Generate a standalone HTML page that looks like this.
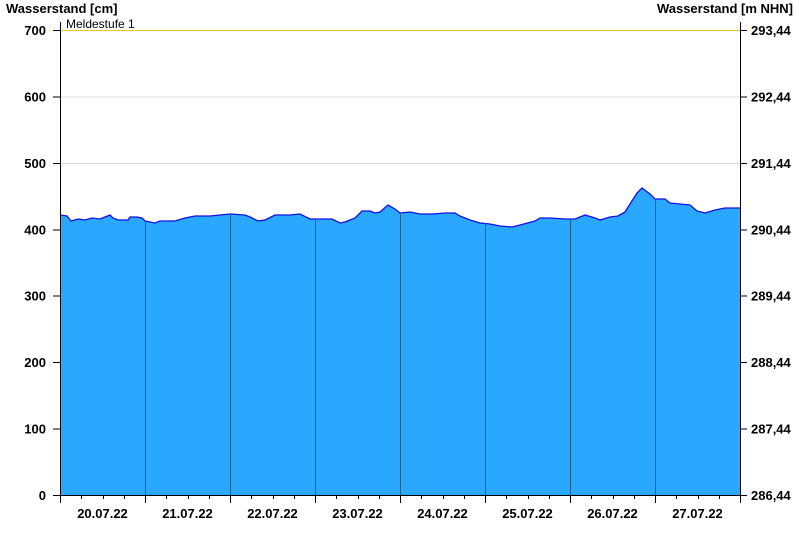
<!DOCTYPE html>
<html><head><meta charset="utf-8"><style>
html,body{margin:0;padding:0;background:#fff;}
svg{display:block;}
text{font-family:"Liberation Sans",Arial,sans-serif;}
.b{font-weight:bold;font-size:13px;fill:#000;}
</style></head><body>
<svg width="800" height="550" viewBox="0 0 800 550" xmlns="http://www.w3.org/2000/svg">
<rect width="800" height="550" fill="#fff"/>
<g stroke="#dcdcdc" stroke-width="1">
<line x1="60" y1="97" x2="740" y2="97"/>
<line x1="60" y1="163.5" x2="740" y2="163.5"/>
<line x1="60" y1="230" x2="740" y2="230"/>
<line x1="60" y1="296" x2="740" y2="296"/>
<line x1="60" y1="362.5" x2="740" y2="362.5"/>
<line x1="60" y1="429" x2="740" y2="429"/>
</g>
<line x1="60" y1="30.5" x2="740" y2="30.5" stroke="#f5c518" stroke-width="1"/>
<text x="66" y="28" font-size="12" fill="#000">Meldestufe 1</text>
<polygon fill="#2aa8ff" stroke="none" points="60,495 60,215 67,216 71,221 78,219 85,220 92,218 100,219 105,217 110,215 113,218 118,220 128,220 130,217 137,217 142,218 145,221 155,223 160,221 175,221 185,218 195,216 210,216 220,215 230,214 245,215 250,217 258,221 265,220 275,215 290,215 300,214 310,219 320,219 332,219 340,223 345,222 355,218 362,211 370,211 375,213 380,212 388,205 395,209 400,213 410,212 420,214 433,214 445,213 455,213 460,216 470,220 480,223 490,224 500,226 512,227 520,225 535,221 540,218 550,218 565,219 575,219 580,217 585,215 595,218 600,220 610,217 618,216 625,212 630,204 637,193 642,188 650,194 655,199 665,199 670,203 680,204 690,205 697,211 705,213 715,210 725,208 740,208 740,495"/>
<polyline fill="none" stroke="#1010e0" stroke-width="1.3" points="60,215 67,216 71,221 78,219 85,220 92,218 100,219 105,217 110,215 113,218 118,220 128,220 130,217 137,217 142,218 145,221 155,223 160,221 175,221 185,218 195,216 210,216 220,215 230,214 245,215 250,217 258,221 265,220 275,215 290,215 300,214 310,219 320,219 332,219 340,223 345,222 355,218 362,211 370,211 375,213 380,212 388,205 395,209 400,213 410,212 420,214 433,214 445,213 455,213 460,216 470,220 480,223 490,224 500,226 512,227 520,225 535,221 540,218 550,218 565,219 575,219 580,217 585,215 595,218 600,220 610,217 618,216 625,212 630,204 637,193 642,188 650,194 655,199 665,199 670,203 680,204 690,205 697,211 705,213 715,210 725,208 740,208"/>
<g stroke="#1f5f8f" stroke-width="1">
<line x1="145.5" y1="221" x2="145.5" y2="495"/>
<line x1="230.5" y1="214" x2="230.5" y2="495"/>
<line x1="315.5" y1="219" x2="315.5" y2="495"/>
<line x1="400.5" y1="213" x2="400.5" y2="495"/>
<line x1="485.5" y1="223" x2="485.5" y2="495"/>
<line x1="570.5" y1="219" x2="570.5" y2="495"/>
<line x1="655.5" y1="199" x2="655.5" y2="495"/>
</g>
<g stroke="#000" stroke-width="1">
<line x1="60.5" y1="22" x2="60.5" y2="496"/>
<line x1="740.5" y1="22" x2="740.5" y2="496"/>
<line x1="60" y1="495.5" x2="741" y2="495.5"/>
<line x1="53" y1="30.5" x2="60" y2="30.5"/>
<line x1="53" y1="97" x2="60" y2="97"/>
<line x1="53" y1="163.5" x2="60" y2="163.5"/>
<line x1="53" y1="230" x2="60" y2="230"/>
<line x1="53" y1="296" x2="60" y2="296"/>
<line x1="53" y1="362.5" x2="60" y2="362.5"/>
<line x1="53" y1="429" x2="60" y2="429"/>
<line x1="53" y1="495.5" x2="60" y2="495.5"/>
<line x1="740" y1="30.5" x2="747" y2="30.5"/>
<line x1="740" y1="97" x2="747" y2="97"/>
<line x1="740" y1="163.5" x2="747" y2="163.5"/>
<line x1="740" y1="230" x2="747" y2="230"/>
<line x1="740" y1="296" x2="747" y2="296"/>
<line x1="740" y1="362.5" x2="747" y2="362.5"/>
<line x1="740" y1="429" x2="747" y2="429"/>
<line x1="740" y1="495.5" x2="747" y2="495.5"/>
</g>
<g stroke="#000" stroke-width="1">
<line x1="60.5" y1="495" x2="60.5" y2="503"/><line x1="145.5" y1="495" x2="145.5" y2="503"/><line x1="230.5" y1="495" x2="230.5" y2="503"/><line x1="315.5" y1="495" x2="315.5" y2="503"/><line x1="400.5" y1="495" x2="400.5" y2="503"/><line x1="485.5" y1="495" x2="485.5" y2="503"/><line x1="570.5" y1="495" x2="570.5" y2="503"/><line x1="655.5" y1="495" x2="655.5" y2="503"/><line x1="740.5" y1="495" x2="740.5" y2="503"/>
<line x1="81.5" y1="495" x2="81.5" y2="499"/><line x1="103.5" y1="495" x2="103.5" y2="499"/><line x1="124.5" y1="495" x2="124.5" y2="499"/>
<line x1="166.5" y1="495" x2="166.5" y2="499"/><line x1="188.5" y1="495" x2="188.5" y2="499"/><line x1="209.5" y1="495" x2="209.5" y2="499"/>
<line x1="251.5" y1="495" x2="251.5" y2="499"/><line x1="273.5" y1="495" x2="273.5" y2="499"/><line x1="294.5" y1="495" x2="294.5" y2="499"/>
<line x1="336.5" y1="495" x2="336.5" y2="499"/><line x1="358.5" y1="495" x2="358.5" y2="499"/><line x1="379.5" y1="495" x2="379.5" y2="499"/>
<line x1="421.5" y1="495" x2="421.5" y2="499"/><line x1="443.5" y1="495" x2="443.5" y2="499"/><line x1="464.5" y1="495" x2="464.5" y2="499"/>
<line x1="506.5" y1="495" x2="506.5" y2="499"/><line x1="528.5" y1="495" x2="528.5" y2="499"/><line x1="549.5" y1="495" x2="549.5" y2="499"/>
<line x1="591.5" y1="495" x2="591.5" y2="499"/><line x1="613.5" y1="495" x2="613.5" y2="499"/><line x1="634.5" y1="495" x2="634.5" y2="499"/>
<line x1="676.5" y1="495" x2="676.5" y2="499"/><line x1="698.5" y1="495" x2="698.5" y2="499"/><line x1="719.5" y1="495" x2="719.5" y2="499"/>
</g>
<text class="b" x="6" y="13">Wasserstand [cm]</text>
<text class="b" x="793" y="13" text-anchor="end">Wasserstand [m NHN]</text>
<g text-anchor="end">
<text class="b" x="46" y="35">700</text>
<text class="b" x="46" y="101.5">600</text>
<text class="b" x="46" y="168">500</text>
<text class="b" x="46" y="234.5">400</text>
<text class="b" x="46" y="300.5">300</text>
<text class="b" x="46" y="367">200</text>
<text class="b" x="46" y="433.5">100</text>
<text class="b" x="46" y="500">0</text>
</g>
<text class="b" x="751" y="35">293,44</text>
<text class="b" x="751" y="101.5">292,44</text>
<text class="b" x="751" y="168">291,44</text>
<text class="b" x="751" y="234.5">290,44</text>
<text class="b" x="751" y="300.5">289,44</text>
<text class="b" x="751" y="367">288,44</text>
<text class="b" x="751" y="433.5">287,44</text>
<text class="b" x="751" y="500">286,44</text>
<g text-anchor="middle">
<text class="b" x="102.5" y="518">20.07.22</text>
<text class="b" x="187.5" y="518">21.07.22</text>
<text class="b" x="272.5" y="518">22.07.22</text>
<text class="b" x="357.5" y="518">23.07.22</text>
<text class="b" x="442.5" y="518">24.07.22</text>
<text class="b" x="527.5" y="518">25.07.22</text>
<text class="b" x="612.5" y="518">26.07.22</text>
<text class="b" x="697.5" y="518">27.07.22</text>
</g>
</svg>
</body></html>
